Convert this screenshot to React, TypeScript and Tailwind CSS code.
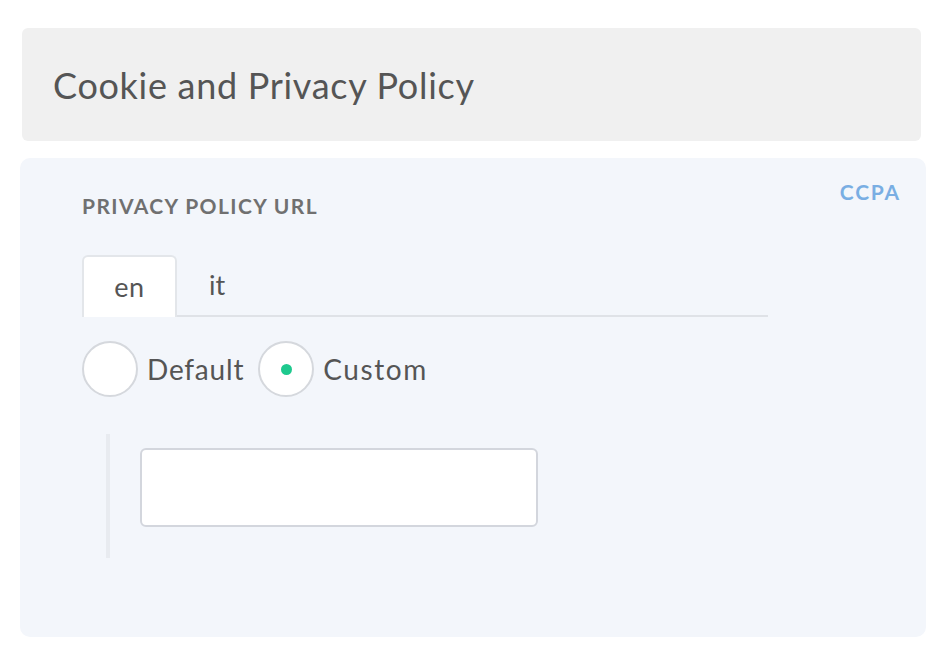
export default function App() {
  return (
    <div className="w-[944px] h-[652px] bg-white pt-[28px] font-['Lato',sans-serif]">
      <div className="mx-[22px] mr-[23px] h-[113px] rounded-md bg-[#f0f0f0] flex items-center pl-[31px]">
        <h1 className="text-[36px] text-[#555555] tracking-[0.7px]">Cookie and Privacy Policy</h1>
      </div>

      <div className="ml-[20px] mr-[18px] mt-[17px] h-[479px] rounded-[10px] bg-[#f3f6fb] flex justify-between pt-[22px] pl-[62px] pr-[25px]">
        <div className="flex flex-col">
          <div className="mt-[14px] text-[21px] font-bold text-[#707070] leading-6 tracking-[1.4px]">PRIVACY POLICY URL</div>

          <div className="mt-[37px] w-[686px] flex items-end border-b-2 border-[#dfe2e7]">
            <div className="w-[95px] h-[62px] -mb-[2px] bg-white border-2 border-b-0 border-[#e3e6ea] rounded-t-md flex items-center justify-center text-[27px] text-[#555555] tracking-[0.5px]">
              en
            </div>
            <div className="w-[80px] h-[60px] flex items-center justify-center text-[27px] text-[#555555]">it</div>
          </div>

          <div className="mt-[24px] flex items-center">
            <span className="w-[56px] h-[56px] rounded-full border-2 border-[#d5d8dd] bg-white" />
            <span className="ml-[9px] text-[28px] text-[#555555] tracking-[0.8px]">Default</span>
            <span className="ml-[14px] w-[56px] h-[56px] rounded-full border-2 border-[#d5d8dd] bg-white flex items-center justify-center">
              <span className="w-[11px] h-[11px] rounded-full bg-[#1ec98e]" />
            </span>
            <span className="ml-[9px] text-[28px] text-[#555555] tracking-[1.6px]">Custom</span>
          </div>

          <div className="mt-[37px] ml-[24px] h-[124px] border-l-4 border-[#e8ebf0] pl-[30px] pt-[14px]">
            <input
              type="text"
              className="w-[398px] h-[79px] bg-white border-2 border-[#d3d6dd] rounded-md outline-none"
            />
          </div>
        </div>

        <a className="text-[21px] font-bold text-[#79aee3] leading-6 self-start tracking-[1.8px]">CCPA</a>
      </div>
    </div>
  );
}
